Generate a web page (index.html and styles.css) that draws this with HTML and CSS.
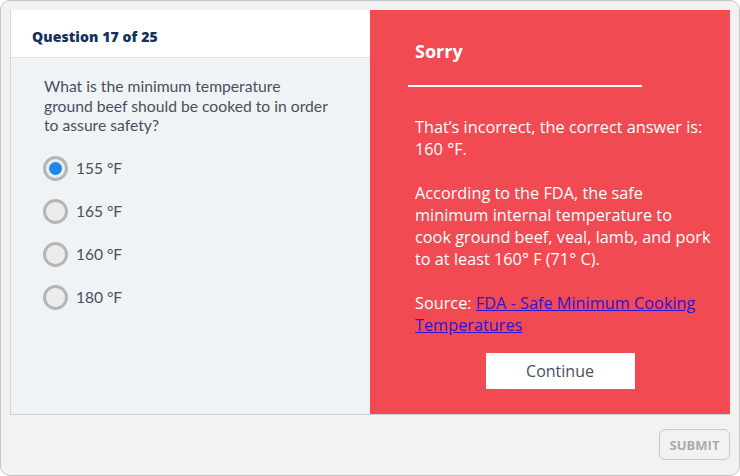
FILE: index.html
```html
<!DOCTYPE html>
<html>
<head>
<meta charset="utf-8">
<link rel="stylesheet" href="styles.css">
</head>
<body>
<div class="frame">
  <div class="card">
    <div class="left">
      <div class="qhead">Question 17 of 25</div>
      <div class="qbody">
        <p class="qtext">What is the minimum temperature ground beef should be cooked to in order to assure safety?</p>
        <ul class="options">
          <li class="option"><span class="radio checked"></span><span>155 °F</span></li>
          <li class="option"><span class="radio"></span><span>165 °F</span></li>
          <li class="option"><span class="radio"></span><span>160 °F</span></li>
          <li class="option"><span class="radio"></span><span>180 °F</span></li>
        </ul>
      </div>
    </div>
    <div class="right">
      <div class="title">Sorry</div>
      <div class="rule"></div>
      <div class="feedback">
        <p>That’s incorrect, the correct answer is:<br>160 °F.</p>
        <p>According to the FDA, the safe<br>minimum internal temperature to<br>cook ground beef, veal, lamb, and pork<br>to at least 160° F (71° C).</p>
        <p>Source: <a href="#">FDA - Safe Minimum Cooking Temperatures</a></p>
        <div class="btnrow"><button class="continue">Continue</button></div>
      </div>
    </div>
  </div>
  <div class="footer"><button class="submit">SUBMIT</button></div>
</div>
</body>
</html>
```
FILE: styles.css
```css
html, body { margin: 0; padding: 0; }
body { width: 740px; height: 476px; background: #ffffff; }
.frame {
  box-sizing: border-box;
  width: 740px;
  height: 476px;
  background: #f2f2f2;
  border: 1px solid #c4c4c4;
  border-radius: 10px;
  padding: 9px 9px 0 9px;
  display: flex;
  flex-direction: column;
}
.card {
  display: flex;
  height: 405px;
  box-sizing: border-box;
  border-bottom: 1px solid #cfd2d8;
}
.left {
  width: 360px;
  box-sizing: border-box;
  border-left: 1px solid #d4d6da;
  background: #eff3f6;
  display: flex;
  flex-direction: column;
}
.qhead {
  height: 48px;
  box-sizing: border-box;
  background: #ffffff;
  border-bottom: 1px solid #dfe3e8;
  padding: 17px 0 0 21px;
  font-family: "Open Sans", sans-serif;
  font-weight: 800;
  font-size: 14px;
  color: #16305a;
  letter-spacing: 0.1px;
}
.qbody { padding: 19px 38px 0 33px; }
.qtext {
  margin: 0;
  font-family: Lato, sans-serif;
  font-size: 15.7px;
  line-height: 19.5px;
  color: #4a4f5c;
}
.options { list-style: none; margin: 11px 0 0 0; padding: 0; }
.option {
  display: flex;
  align-items: center;
  height: 43px;
  font-family: Lato, sans-serif;
  font-size: 15.5px;
  color: #4a4f5c;
}
.radio {
  box-sizing: border-box;
  width: 25px;
  height: 25px;
  border-radius: 50%;
  border: 3px solid #b5b5b5;
  background: #ececec;
  margin-right: 8px;
  margin-left: -1px;
  display: flex;
  align-items: center;
  justify-content: center;
}
.radio.checked::after {
  content: "";
  width: 13px;
  height: 13px;
  border-radius: 50%;
  background: #1f86ec;
}
.right {
  width: 360px;
  background: #f24a52;
  color: #ffffff;
  font-family: "Open Sans", sans-serif;
  display: flex;
  flex-direction: column;
}
.title {
  font-weight: 700;
  font-size: 18px;
  padding: 29px 0 0 45px;
  line-height: 24px;
}
.rule {
  margin: 22px 0 0 38px;
  width: 234px;
  height: 2px;
  background: #ffffff;
}
.feedback {
  padding: 29px 10px 0 45px;
  font-size: 16.3px;
  line-height: 22px;
}
.feedback p { margin: 0 0 22px 0; }
.feedback a { color: #2f15d4; }
.btnrow { display: flex; justify-content: center; margin-top: -5px; padding-right: 15px; }
.continue {
  width: 149px;
  height: 36px;
  background: #ffffff;
  border: none;
  font-family: "Open Sans", sans-serif;
  font-size: 16px;
  color: #4a4f5c;
}
.footer {
  display: flex;
  justify-content: flex-end;
  padding-top: 14px;
}
.submit {
  width: 71px;
  height: 31px;
  box-sizing: border-box;
  border: 1px solid #c9c9c9;
  border-radius: 6px;
  background: #f2f2f2;
  color: #ababab;
  font-family: "Open Sans", sans-serif;
  font-weight: 700;
  font-size: 13px;
  padding: 0;
}
```
